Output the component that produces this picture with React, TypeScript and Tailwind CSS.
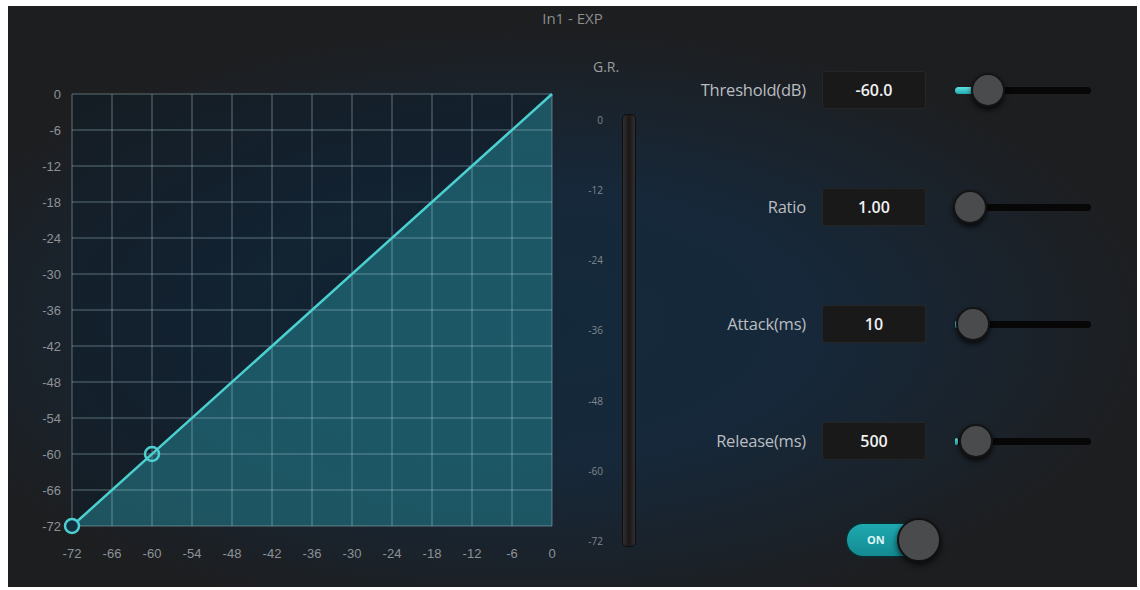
import React from "react";

const gridX = Array.from({ length: 13 }, (_, i) => 72 + i * 40);
const gridY = Array.from({ length: 13 }, (_, i) => 94 + i * 36);
const dbTicks = [0, -6, -12, -18, -24, -30, -36, -42, -48, -54, -60, -66, -72];
const grTicks = [0, -12, -24, -36, -48, -60, -72];

const params = [
  { label: "Threshold(dB)", value: "-60.0", knob: 33, fill: 20 },
  { label: "Ratio", value: "1.00", knob: 15, fill: 0 },
  { label: "Attack(ms)", value: "10", knob: 18, fill: 3 },
  { label: "Release(ms)", value: "500", knob: 21, fill: 3 },
];

function TransferCurve() {
  return (
    <svg width={570} height={551} viewBox="8 30 570 551" className="shrink-0">
      <rect x={72} y={94} width={480} height={432} fill="#0e1d2a" fillOpacity={0.45} />
      <polygon points="72,526 552,94 552,526" fill="#2a97a6" fillOpacity={0.45} />
      {gridX.map((x) => (
        <line key={"v" + x} x1={x} y1={94} x2={x} y2={526} stroke="#b4d2dc" strokeOpacity={0.45} strokeWidth={1} />
      ))}
      {gridY.map((y) => (
        <line key={"h" + y} x1={72} y1={y} x2={552} y2={y} stroke="#b4d2dc" strokeOpacity={0.45} strokeWidth={1} />
      ))}
      <line x1={72} y1={526} x2={552} y2={94} stroke="#4ccfd0" strokeWidth={2.5} />
      <circle cx={72} cy={526} r={7} fill="#123040" stroke="#4ccfd0" strokeWidth={2.5} />
      <circle cx={152} cy={454} r={7} fill="none" stroke="#4ccfd0" strokeWidth={2.5} />
      {dbTicks.map((v, i) => (
        <text key={"y" + v} x={61} y={94 + i * 36 + 4.5} textAnchor="end" fontSize={13} fill="#8c9298" fontFamily="'Liberation Sans', sans-serif">
          {v}
        </text>
      ))}
      {dbTicks
        .slice()
        .reverse()
        .map((v, i) => (
          <text key={"x" + v} x={72 + i * 40} y={558} textAnchor="middle" fontSize={13} fill="#8c9298" fontFamily="'Liberation Sans', sans-serif">
            {v}
          </text>
        ))}
    </svg>
  );
}

function Meter() {
  return (
    <div className="flex w-[72px] shrink-0 flex-col pt-[29px]">
      <div className="h-[16px] pl-[15px] text-[14px] leading-[16px] text-[#9a9c9e]">G.R.</div>
      <div className="mt-[39px] flex h-[433px]">
        <div className="flex w-[25px] flex-col items-end justify-between text-[10px] leading-[12px] text-[#80878d]">
          {grTicks.map((t) => (
            <span key={t}>{t}</span>
          ))}
        </div>
        <div className="ml-[19px] w-[14px] rounded-[5px] border border-[#0e0e0e] bg-gradient-to-r from-[#303030] via-[#1c1617] to-[#303030]" />
      </div>
    </div>
  );
}

function Slider({ knob, fill }: { knob: number; fill: number }) {
  return (
    <div className="relative ml-[29px] flex h-[38px] w-[136px] items-center">
      <div className="h-[7px] w-full rounded-full bg-[#070707]" />
      {fill > 0 && (
        <div
          className="absolute left-0 top-[15.5px] h-[7px] rounded-full bg-gradient-to-b from-[#5be3e3] to-[#23a9b0]"
          style={{ width: fill }}
        />
      )}
      <div
        className="absolute top-[2px] h-[34px] w-[34px] rounded-full border-2 border-[#141414] bg-[#4a4b4d] shadow-[0_3px_5px_rgba(0,0,0,0.7)]"
        style={{ left: knob - 17 }}
      />
    </div>
  );
}

function ParamRow({ label, value, knob, fill }: { label: string; value: string; knob: number; fill: number }) {
  return (
    <div className="flex h-[38px] items-center">
      <div className="w-[156px] text-right text-[16.5px] tracking-[-0.2px] text-[#b9bdc1]">{label}</div>
      <div className="ml-[16px] flex h-[38px] w-[104px] items-center justify-center rounded-[3px] border border-[#262626] bg-[#19191a] text-[16px] font-semibold text-[#f1f1f1]">
        {value}
      </div>
      <Slider knob={knob} fill={fill} />
    </div>
  );
}

function Controls() {
  return (
    <div className="flex flex-col pt-[41px]">
      <div className="flex flex-col gap-[79px]">
        {params.map((p) => (
          <ParamRow key={p.label} {...p} />
        ))}
      </div>
      <div className="ml-[195px] mt-[62px] flex">
        <div className="relative h-[36px] w-[95px] rounded-full border-2 border-[#0f2a2d] bg-gradient-to-b from-[#1fa9b0] to-[#138a92]">
          <span className="absolute left-[20px] top-[9px] text-[11px] font-bold leading-[14px] text-[#dff6f7]">ON</span>
          <div className="absolute right-[-3px] top-[-6px] h-[44px] w-[44px] rounded-full border-2 border-[#111] bg-[#4a4b4d] shadow-[0_3px_6px_rgba(0,0,0,0.7)]" />
        </div>
      </div>
    </div>
  );
}

export default function App() {
  return (
    <div className="h-[590px] w-[1140px] bg-white pb-[3px] pl-[8px] pr-[3px] pt-[6px] font-['Open_Sans',sans-serif]">
      <div className="flex h-full w-full flex-col bg-[#1d1e20] bg-[radial-gradient(ellipse_56%_52%_at_46%_55%,#13293a_0%,#16283a_45%,#1d1e20_100%)]">
        <div className="h-[24px] text-center text-[15px] leading-[24px] text-[#8b8c8e]">In1 - EXP</div>
        <div className="flex">
          <TransferCurve />
          <Meter />
          <Controls />
        </div>
      </div>
    </div>
  );
}
